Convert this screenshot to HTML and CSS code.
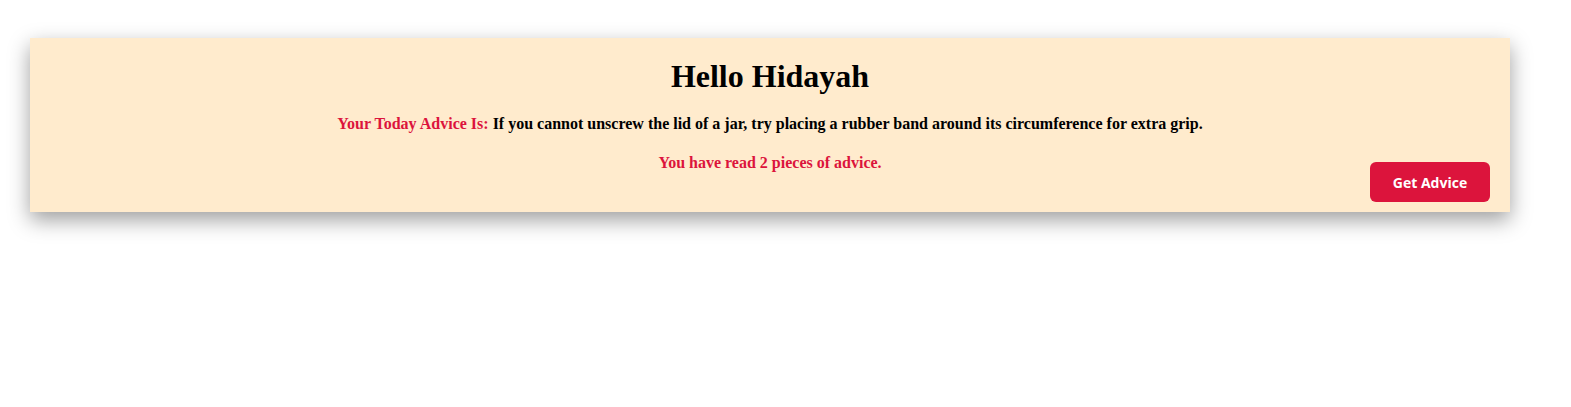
FILE: index.html
```html
<!DOCTYPE html>
<html lang="en">
<head>
<meta charset="utf-8">
<title>Advice</title>
<link rel="stylesheet" href="styles.css">
</head>
<body>
  <div class="card">
    <h1 class="greeting">Hello Hidayah</h1>
    <p class="advice"><span class="label">Your Today Advice Is:</span> If you cannot unscrew the lid of a jar, try placing a rubber band around its circumference for extra grip.</p>
    <p class="count">You have read 2 pieces of advice.</p>
    <button class="btn">Get Advice</button>
  </div>
</body>
</html>
```
FILE: styles.css
```css
html, body {
  margin: 0;
  padding: 0;
  background: #ffffff;
}
body {
  font-family: "Liberation Serif", "Times New Roman", serif;
  padding-top: 38px;
  min-height: 100vh;
  box-sizing: border-box;
}
.card {
  position: relative;
  margin-left: 30px;
  width: 1480px;
  box-sizing: border-box;
  background: #ffebcd;
  padding: 20px 0 40px;
  text-align: center;
  box-shadow: 0 8px 20px rgba(0, 0, 0, 0.38);
}
.greeting {
  margin: 0 0 20px;
  font-size: 32px;
  font-weight: bold;
  color: #000;
}
.advice {
  margin: 0 0 21px;
  font-size: 16px;
  font-weight: bold;
  color: #000;
}
.label {
  color: #dc143c;
}
.count {
  margin: 0;
  font-size: 16px;
  font-weight: bold;
  color: #dc143c;
}
.btn {
  position: absolute;
  right: 20px;
  bottom: 10px;
  width: 120px;
  height: 40px;
  border: none;
  border-radius: 6px;
  background: #dc143c;
  color: #fff;
  font-family: "Open Sans", "DejaVu Sans", sans-serif;
  font-weight: 700;
  font-size: 14px;
  cursor: pointer;
}
```
